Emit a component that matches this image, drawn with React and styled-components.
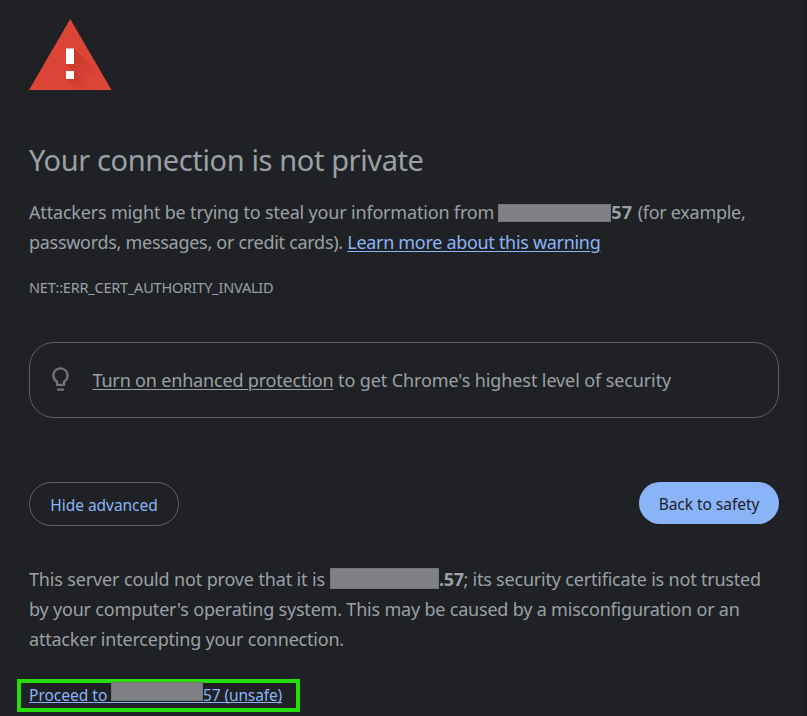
import React from 'react';
import styled, { createGlobalStyle } from 'styled-components';

const GlobalStyle = createGlobalStyle`
  * { box-sizing: border-box; }
  body {
    margin: 0;
    background: #202124;
    color: #9aa0a6;
    font-family: "Noto Sans", "Open Sans", sans-serif;
    overflow: hidden;
  }
`;

const Page = styled.main`
  width: 807px;
  height: 716px;
  padding: 18px 25px 0 29px;
  border-right: 3px solid #1c1d20;
  display: flex;
  flex-direction: column;
`;

const WarningIcon = styled.svg`
  display: block;
  flex: none;
  width: 84px;
  height: 73px;
`;

const Heading = styled.h1`
  margin: 48px 0 0;
  font-size: 29px;
  font-weight: 400;
  line-height: 41px;
  letter-spacing: -0.38px;
  white-space: nowrap;
`;

const Paragraph = styled.div`
  margin-top: ${(p) => p.$top}px;
  font-size: 18px;
  line-height: 30px;
`;

const Line = styled.div`
  display: flex;
  height: 30px;
  white-space: pre;
`;

const Text = styled.span`
  letter-spacing: ${(p) => p.$track || 0}px;
`;

const Host = styled.strong`
  flex: none;
  width: ${(p) => p.$width}px;
  font-weight: 700;
  letter-spacing: ${(p) => p.$track || 0}px;
`;

const Redaction = styled.span`
  flex: none;
  width: ${(p) => p.$width}px;
  height: ${(p) => p.$height}px;
  margin-top: ${(p) => p.$top}px;
  margin-left: ${(p) => p.$left}px;
  background: #808184;
  border: 1px solid #747578;
`;

const Link = styled.a`
  color: #8ab4f8;
  text-decoration: underline;
  text-decoration-thickness: 1px;
  text-underline-offset: 2px;
  letter-spacing: ${(p) => p.$track || 0}px;
  margin-left: ${(p) => p.$left || 0}px;
`;

const ErrorCode = styled.div`
  margin-top: 20px;
  font-size: 14.5px;
  line-height: 20px;
  letter-spacing: -0.22px;
`;

const Banner = styled.section`
  display: flex;
  align-items: center;
  width: 750px;
  height: 76px;
  margin-top: 45px;
  padding-left: 20.5px;
  border: 1px solid #5f6064;
  border-radius: 25px;
  font-size: 18px;
  line-height: 30px;
  white-space: pre;
`;

const BulbIcon = styled.svg`
  flex: none;
  width: 19px;
  height: 26px;
  margin: 0 23px 2px 0;
  fill: #737476;
`;

const BannerLink = styled(Link)`
  color: inherit;
`;

const Actions = styled.div`
  display: flex;
  justify-content: space-between;
  align-items: flex-start;
  width: 750px;
  margin-top: 64px;
  height: 44px;
`;

const Button = styled.button`
  padding: 2px 0 0;
  border-radius: 22px;
  font: 15.5px/24px "Noto Sans", "Open Sans", sans-serif;
  letter-spacing: -0.04px;
`;

const SecondaryButton = styled(Button)`
  width: 150px;
  height: 44px;
  border: 1px solid #5f6064;
  background: transparent;
  color: #8ab4f8;
`;

const PrimaryButton = styled(Button)`
  width: 140px;
  height: 42px;
  border: 0;
  background: #8ab4f8;
  color: #202124;
`;

const Proceed = styled.div`
  display: flex;
  width: 283px;
  height: 33px;
  margin: 25px 0 0 -12px;
  padding-left: 8px;
  border: 4px solid #26dd04;
  font-size: 15.5px;
  line-height: 25px;
  white-space: pre;
`;

const ProceedLink = styled(Link)`
  display: flex;
  width: 253px;
  height: 20px;
  border-bottom: 1px solid #8ab4f8;
  text-decoration: none;
`;

const ProceedText = styled.span`
  flex: none;
  width: ${(p) => p.$width}px;
  letter-spacing: ${(p) => p.$track || 0}px;
`;

export default function App() {
  return (
    <>
      <GlobalStyle />
      <Page>
        <WarningIcon viewBox="0 0 84 73">
          <defs>
            <linearGradient id="shade" x1="42" y1="36" x2="62" y2="62" gradientUnits="userSpaceOnUse">
              <stop offset="0" stopColor="#a52714" stopOpacity="0.42" />
              <stop offset="1" stopColor="#a52714" stopOpacity="0" />
            </linearGradient>
            <linearGradient id="dotShade" x1="40" y1="57" x2="51" y2="72" gradientUnits="userSpaceOnUse">
              <stop offset="0" stopColor="#a52714" stopOpacity="0.42" />
              <stop offset="1" stopColor="#a52714" stopOpacity="0.05" />
            </linearGradient>
          </defs>
          <path d="M41.2 1 82.5 72H0Z" fill="#db4437" />
          <path d="M45 30.5 76 61.5 82.5 72H63L37 46 45 40Z" fill="url(#shade)" />
          <path d="M45 53 64 72H48L37 61Z" fill="url(#dotShade)" />
          <path d="M37 30.5H45V46H37ZM37 53H45V61H37Z" fill="#fff" />
        </WarningIcon>
        <Heading>Your connection is not private</Heading>
        <Paragraph $top={17}>
          <Line>
            <Text $track={-0.18}>Attackers might be trying to steal your information from</Text>
            <Redaction $width={113} $height={18} $top={7} $left={4} />
            <Host $width={26.5} $track={0.2}>57</Host>
            <Text $track={-0.28}>(for example,</Text>
          </Line>
          <Line>
            <Text $track={-0.29}>passwords, messages, or credit cards).</Text>
            <Link $track={-0.31} $left={4.4}>Learn more about this warning</Link>
          </Line>
        </Paragraph>
        <ErrorCode>NET::ERR_CERT_AUTHORITY_INVALID</ErrorCode>
        <Banner>
          <BulbIcon viewBox="4 1 16 22">
            <path d="M9 21c0 .55.45 1 1 1h4c.55 0 1-.45 1-1v-1H9v1zm3-19C8.14 2 5 5.14 5 9c0 2.38 1.19 4.47 3 5.74V17c0 .55.45 1 1 1h6c.55 0 1-.45 1-1v-2.26c1.81-1.27 3-3.36 3-5.74 0-3.86-3.14-7-7-7zm2.85 11.1-.85.6V16h-4v-2.3l-.85-.6A4.997 4.997 0 0 1 7 9c0-2.76 2.24-5 5-5s5 2.24 5 5c0 1.63-.8 3.16-2.15 4.1z" />
          </BulbIcon>
          <BannerLink $track={-0.18}>Turn on enhanced protection</BannerLink>
          <Text $track={-0.11}> to get Chrome's highest level of security</Text>
        </Banner>
        <Actions>
          <SecondaryButton>Hide advanced</SecondaryButton>
          <PrimaryButton>Back to safety</PrimaryButton>
        </Actions>
        <Paragraph $top={38}>
          <Line>
            <Text $track={-0.15}>This server could not prove that it is</Text>
            <Redaction $width={109} $height={21} $top={4} $left={5} />
            <Host $width={24.5} $track={-0.3}>.57</Host>
            <Text $track={-0.2}>; its security certificate is not trusted</Text>
          </Line>
          <Line>
            <Text $track={-0.2}>by your computer's operating system. This may be caused by a misconfiguration or an</Text>
          </Line>
          <Line>
            <Text $track={-0.21}>attacker intercepting your connection.</Text>
          </Line>
        </Paragraph>
        <Proceed>
          <ProceedLink>
            <ProceedText $width={82}>Proceed to</ProceedText>
            <Redaction $width={92} $height={19} $top={-1} $left={0} />
            <ProceedText $width={79} $track={-0.12}>57 (unsafe)</ProceedText>
          </ProceedLink>
        </Proceed>
      </Page>
    </>
  );
}
